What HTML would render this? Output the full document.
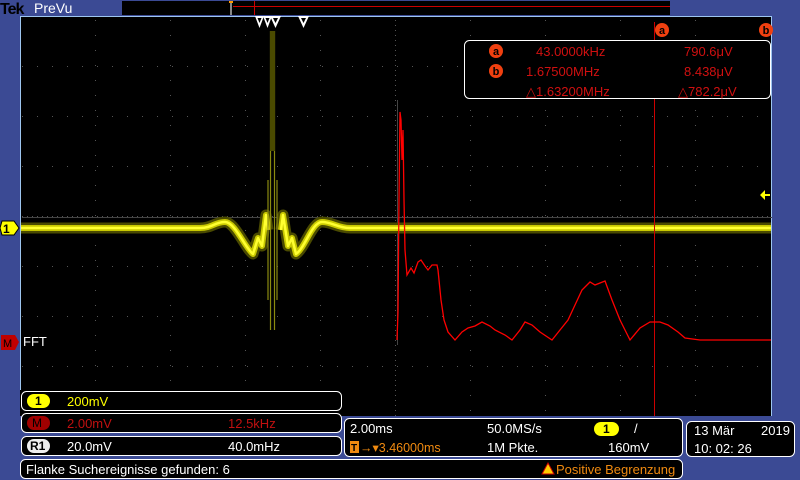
<!DOCTYPE html>
<html><head><meta charset="utf-8"><style>
html,body{margin:0;padding:0;background:#3b4a94;width:800px;height:480px;overflow:hidden;font-family:"Liberation Sans",sans-serif}
svg{display:block}
text{font-family:"Liberation Sans",sans-serif}
</style></head><body>
<svg width="800" height="480" viewBox="0 0 800 480" xmlns="http://www.w3.org/2000/svg">
<rect width="800" height="480" fill="#3b4a94"/>
<!-- top bar -->
<text x="0" y="14" font-family="Liberation Serif" font-weight="bold" font-size="16" fill="#000" letter-spacing="-1">Tek</text>
<text x="34" y="13" font-size="14" fill="#fff">PreVu</text>
<rect x="122" y="1" width="548" height="14" fill="#000"/>
<line x1="233" y1="6.5" x2="670" y2="6.5" stroke="#c00" stroke-width="1"/>
<line x1="254.5" y1="1" x2="254.5" y2="15" stroke="#c00"/>
<rect x="230" y="2" width="2" height="13" fill="#888"/>
<rect x="229" y="1" width="4" height="2" fill="#f90"/>
<!-- screen -->
<rect x="20" y="16" width="752" height="400" fill="#000"/>
<line x1="20.5" y1="16" x2="20.5" y2="390" stroke="#9ec6f0"/>
<line x1="20" y1="16.5" x2="772" y2="16.5" stroke="#9ec6f0"/>
<line x1="771.5" y1="16" x2="771.5" y2="416" stroke="#9ec6f0"/>
<g stroke="#555" stroke-width="1" stroke-dasharray="1 14">
<line x1="95.5" y1="20" x2="95.5" y2="416"/><line x1="170.5" y1="20" x2="170.5" y2="416"/><line x1="245.5" y1="20" x2="245.5" y2="416"/><line x1="320.5" y1="20" x2="320.5" y2="416"/><line x1="395.5" y1="20" x2="395.5" y2="416" stroke-dasharray="1 4"/><line x1="470.5" y1="20" x2="470.5" y2="416"/><line x1="545.5" y1="20" x2="545.5" y2="416"/><line x1="620.5" y1="20" x2="620.5" y2="416"/><line x1="695.5" y1="20" x2="695.5" y2="416"/>
<line x1="22" y1="66.5" x2="772" y2="66.5"/><line x1="22" y1="116.5" x2="772" y2="116.5"/><line x1="22" y1="166.5" x2="772" y2="166.5"/><line x1="22" y1="216.5" x2="772" y2="216.5" stroke-dasharray="1 4"/><line x1="22" y1="266.5" x2="772" y2="266.5"/><line x1="22" y1="316.5" x2="772" y2="316.5"/><line x1="22" y1="366.5" x2="772" y2="366.5"/>
</g>
<line x1="22" y1="217.5" x2="772" y2="217.5" stroke="#444"/>
<line x1="397.5" y1="100" x2="397.5" y2="345" stroke="#444"/>
<!-- yellow trace -->
<g fill="none" stroke-linejoin="round">
<path d="M21 228 L200 228 C212 228 215 222 225 222 C235 222 245 248 253 254 L258 238 L262 246 L266 215 L268 230 M281 230 L283 215 L288 246 L292 238 L296 254 C305 248 312 222 322 222 C332 222 338 228 350 228 L771 228" stroke="#4a4a00" stroke-width="11"/>
<path d="M21 228 L200 228 C212 228 215 222 225 222 C235 222 245 248 253 254 L258 238 L262 246 L266 215 L268 230 M281 230 L283 215 L288 246 L292 238 L296 254 C305 248 312 222 322 222 C332 222 338 228 350 228 L771 228" stroke="#c8c800" stroke-width="6"/>
<path d="M21 228 L200 228 C212 228 215 222 225 222 C235 222 245 248 253 254 L258 238 L262 246 L266 215 L268 230 M281 230 L283 215 L288 246 L292 238 L296 254 C305 248 312 222 322 222 C332 222 338 228 350 228 L771 228" stroke="#ffff30" stroke-width="2.5"/>
<path d="M270.5 31 L270.5 330 M274.5 31 L274.5 330 M268 180 L268 300 M277 180 L277 300" stroke="#8a8a10" stroke-width="1.2"/>
<rect x="270" y="31" width="5" height="120" fill="#4a4a00" stroke="none"/>
</g>
<!-- red FFT -->
<line x1="654.5" y1="22" x2="654.5" y2="416" stroke="#c00"/>
<polyline fill="none" stroke="#f00" stroke-width="1.3" points="397,340 398,312 399,200 400,112 401,120 402,160 403,130 404,200 405,250 407,275 411,268 414,273 418,262 421,260 425,266 428,270 432,265 437,265 438,270 441,300 444,320 448,332 455,340 462,332 468,328 475,326 482,322 490,326 495,330 505,335 512,340 520,330 525,322 532,325 540,332 552,340 560,330 568,320 575,305 582,290 590,282 595,285 605,281 612,300 620,320 630,340 640,328 650,322 660,322 668,325 678,332 685,338 700,340 771,340"/>
<!-- top markers -->
<g fill="#fff">
<path d="M255 16 L264 16 L259.5 28Z"/><path d="M263 16 L272 16 L267.5 28Z"/><path d="M270 16 L281 16 L275.5 28Z"/><path d="M298 16 L309 16 L303.5 28Z"/>
</g>
<g fill="#000"><path d="M257.5 18 L261.5 18 L259.5 23Z"/><path d="M265.5 18 L269.5 18 L267.5 23Z"/><path d="M273 18 L278 18 L275.5 23Z"/><path d="M301 18 L306 18 L303.5 23Z"/></g>
<!-- cursor labels -->
<circle cx="662" cy="30" r="7" fill="#f04010"/><text x="662" y="34" font-size="11" font-weight="bold" fill="#000" text-anchor="middle">a</text>
<circle cx="766" cy="30" r="7" fill="#f04010"/><text x="766" y="34" font-size="11" font-weight="bold" fill="#000" text-anchor="middle">b</text>
<!-- meas box -->
<rect x="464.5" y="40.5" width="306" height="58" rx="5" fill="#000" stroke="#fff"/>
<circle cx="496" cy="51" r="7" fill="#f04010"/><text x="496" y="55" font-size="11" font-weight="bold" fill="#000" text-anchor="middle">a</text>
<circle cx="496" cy="71" r="7" fill="#f04010"/><text x="496" y="75" font-size="11" font-weight="bold" fill="#000" text-anchor="middle">b</text>
<g font-size="13" fill="#d01010">
<text x="536" y="56">43.0000kHz</text><text x="684" y="56">790.6μV</text>
<text x="526" y="76">1.67500MHz</text><text x="684" y="76">8.438μV</text>
<text x="526" y="96">△1.63200MHz</text><text x="678" y="96">△782.2μV</text>
</g>
<!-- side markers -->
<path d="M0 228 L2 221 L14 221 L19 228 L14 235 L2 235Z" fill="#ffff00" stroke="#000"/>
<text x="3" y="233" font-size="12" font-weight="bold" fill="#000">1</text>
<path d="M1 335 L15 335 L19 342 L15 350 L1 350Z" fill="#c00000"/>
<text x="3" y="347" font-size="11" fill="#000">M</text>
<text x="23" y="346" font-size="13" fill="#fff">FFT</text>
<path d="M760 195 L765 190 L765 194 L770 194 L770 196 L765 196 L765 200Z" fill="#ffff00"/>
<!-- bottom panels -->
<rect x="20" y="416" width="324" height="64" fill="#3b4a94"/>
<rect x="21.5" y="391.5" width="320" height="19" rx="5" fill="#000" stroke="#fff"/>
<rect x="27" y="394" width="23" height="14" rx="7" fill="#ffff00"/><text x="35" y="405" font-size="12" font-weight="bold" fill="#000">1</text>
<text x="67" y="406" font-size="13" fill="#ffff00">200mV</text>
<rect x="21.5" y="413.5" width="320" height="19" rx="5" fill="#000" stroke="#fff"/>
<rect x="27" y="416" width="23" height="14" rx="7" fill="#a00000"/><text x="32" y="427" font-size="12" fill="#000">M</text>
<text x="67" y="428" font-size="13" fill="#c01010">2.00mV</text><text x="228" y="428" font-size="13" fill="#c01010">12.5kHz</text>
<rect x="21.5" y="436.5" width="320" height="19" rx="5" fill="#000" stroke="#fff"/>
<rect x="27" y="439" width="23" height="14" rx="7" fill="#eee"/><text x="30" y="450" font-size="12" font-weight="bold" fill="#000">R1</text>
<text x="67" y="451" font-size="13" fill="#fff">20.0mV</text><text x="228" y="451" font-size="13" fill="#fff">40.0mHz</text>
<rect x="344.5" y="418.5" width="338" height="38" rx="5" fill="#000" stroke="#fff"/>
<text x="350" y="433" font-size="13" fill="#fff">2.00ms</text>
<rect x="350" y="441" width="9" height="12" fill="#f08a10"/><text x="351" y="451" font-size="10" font-weight="bold" fill="#000">T</text>
<text x="360" y="452" font-size="12.5" fill="#f08a10">→▾3.46000ms</text>
<text x="487" y="433" font-size="13" fill="#fff">50.0MS/s</text>
<text x="487" y="452" font-size="13" fill="#fff">1M Pkte.</text>
<rect x="594" y="422" width="25" height="14" rx="7" fill="#ffff00"/><text x="603" y="433" font-size="12" font-weight="bold" fill="#000">1</text>
<text x="634" y="433" font-size="13" fill="#fff">/</text>
<text x="608" y="452" font-size="13" fill="#fff">160mV</text>
<rect x="686.5" y="421.5" width="108" height="35" rx="5" fill="#000" stroke="#fff"/>
<text x="694" y="435" font-size="13" fill="#fff">13 Mär</text><text x="761" y="435" font-size="13" fill="#fff">2019</text>
<text x="694" y="453" font-size="13" fill="#fff">10: 02: 26</text>
<rect x="20.5" y="459.5" width="662" height="19" rx="5" fill="#000" stroke="#fff"/>
<text x="26" y="474" font-size="13" fill="#fff">Flanke Suchereignisse gefunden: 6</text>
<path d="M542 474 L548 463 L554 474Z" fill="#ffcc00" stroke="#c00" stroke-width="1"/>
<text x="556" y="474" font-size="13" fill="#f08a10">Positive Begrenzung</text>
</svg>
</body></html>
